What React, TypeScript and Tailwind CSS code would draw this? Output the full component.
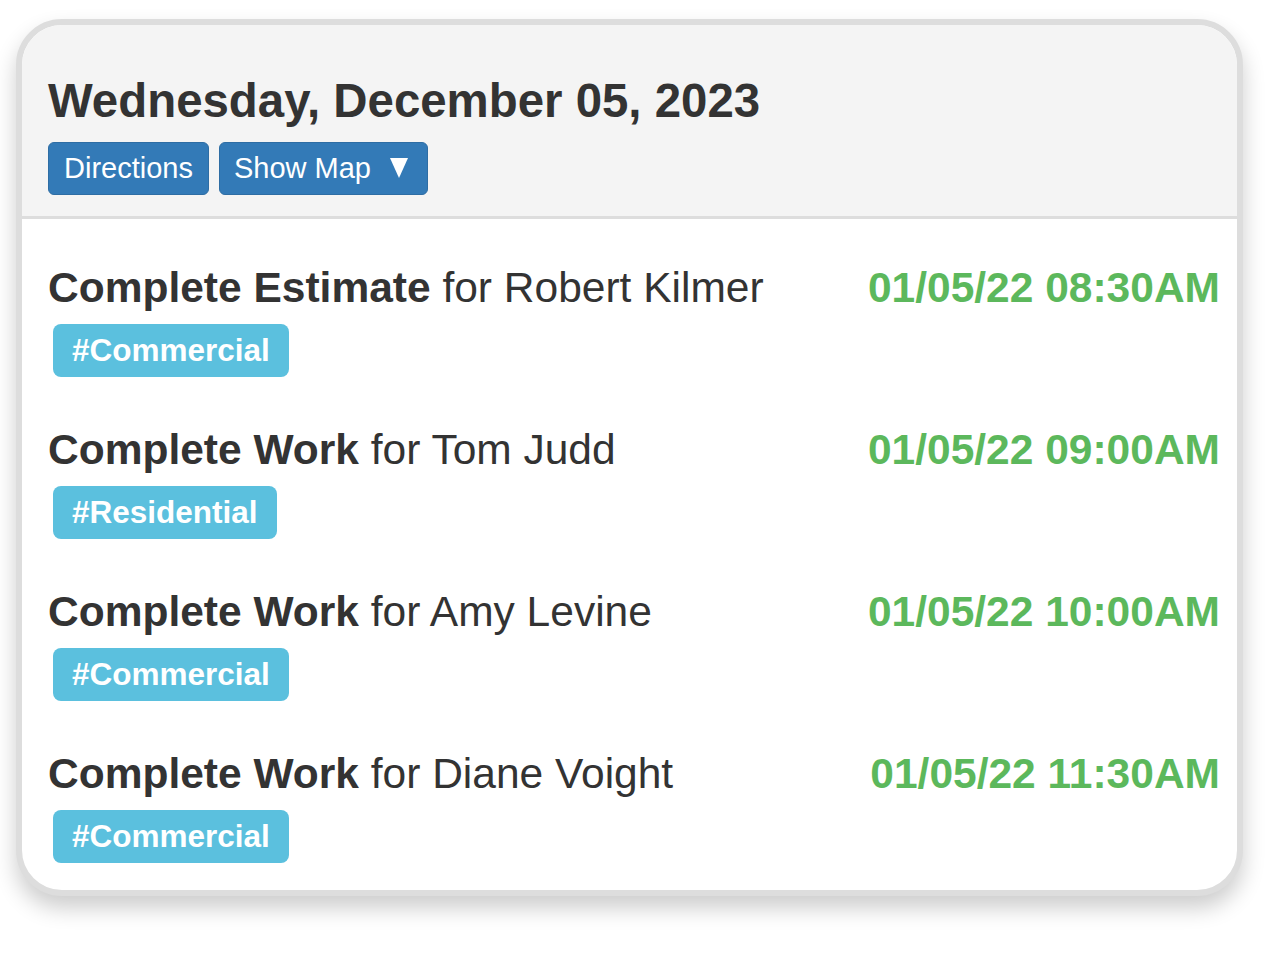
import React from "react";

const rows = [
  { task: "Complete Estimate", name: "Robert Kilmer", tag: "#Commercial", time: "01/05/22 08:30AM" },
  { task: "Complete Work", name: "Tom Judd", tag: "#Residential", time: "01/05/22 09:00AM" },
  { task: "Complete Work", name: "Amy Levine", tag: "#Commercial", time: "01/05/22 10:00AM" },
  { task: "Complete Work", name: "Diane Voight", tag: "#Commercial", time: "01/05/22 11:30AM" },
];

export default function App() {
  return (
    <div
      className="min-h-[956px] bg-white pt-[19px] pl-[16px] text-[#333]"
      style={{ fontFamily: '"Liberation Sans", Arial, Helvetica, sans-serif' }}
    >
      <div className="w-[1227px] rounded-[46px] border-[6px] border-[#dddddd] bg-white overflow-hidden shadow-[0_12px_22px_rgba(0,0,0,0.2)]">
        <div className="bg-[#f4f4f4] border-b-[3px] border-[#dddddd] pt-[49px] pb-[21px] pl-[26px] pr-[17px]">
          <h3 className="text-[47.4px] leading-[53px] font-bold m-0">Wednesday, December 05, 2023</h3>
          <div className="mt-[15px] flex gap-[10px]">
            <button className="h-[53px] px-[15px] rounded-[6px] border border-[#2e6da4] bg-[#337ab7] text-white text-[29px] leading-none flex items-center">
              Directions
            </button>
            <button className="h-[53px] pl-[14px] pr-[19px] rounded-[6px] border border-[#2e6da4] bg-[#337ab7] text-white text-[29px] leading-none flex items-center">
              Show Map
              <svg width="18" height="20" viewBox="0 0 18 20" className="ml-[19px] mb-[1px]">
                <polygon points="0,0 18,0 9,20" fill="white" />
              </svg>
            </button>
          </div>
        </div>
        <div className="pt-[39px] pb-[27px] pl-[26px] pr-[17px] flex flex-col gap-[43px]">
          {rows.map((r, i) => (
            <div key={i} className="flex flex-col">
              <div className="flex justify-between text-[42.5px] leading-[60px]">
                <div>
                  <span className="font-bold">{r.task}</span> for {r.name}
                </div>
                <div className="font-bold text-[#5cb85c]">{r.time}</div>
              </div>
              <div className="mt-[6px] ml-[5px] flex">
                <span className="h-[53px] px-[19px] rounded-[8px] bg-[#5bc0de] text-white font-bold text-[31.5px] leading-none flex items-center">
                  {r.tag}
                </span>
              </div>
            </div>
          ))}
        </div>
      </div>
    </div>
  );
}
